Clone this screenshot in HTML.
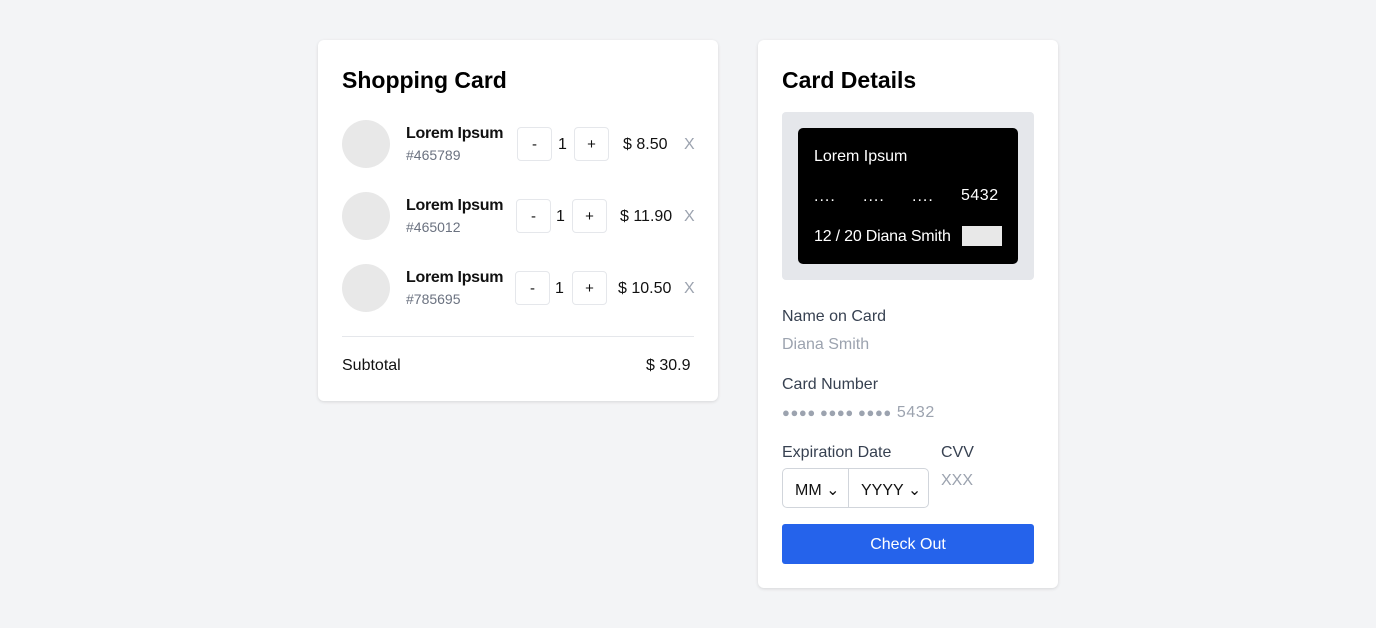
<!DOCTYPE html>
<html><head><style>
*{margin:0;padding:0;box-sizing:border-box}
body{width:1376px;height:628px;background:#f3f4f6;font-family:"Liberation Sans",sans-serif;position:relative;overflow:hidden;color:#111}
.a{position:absolute;white-space:nowrap}
.card{position:absolute;background:#fff;border-radius:6px;box-shadow:0 1px 3px rgba(0,0,0,.12)}
h1{font-size:23px;font-weight:bold;color:#000}
.circ{position:absolute;width:48px;height:48px;border-radius:50%;background:#e8e8e8}
.btn{position:absolute;width:35px;height:34px;border:1px solid #e5e7eb;border-radius:4px;text-align:center;line-height:34px;font-size:15px;background:#fff}
.nm{font-size:16px;font-weight:bold;color:#111;letter-spacing:-0.3px}
.id{font-size:14px;color:#6b7280}
.lab{font-size:16px;color:#374151}
.ph{font-size:16px;color:#9ca3af}
</style></head><body>
<div class="card" style="left:318px;top:40px;width:400px;height:361px"></div>
<div class="a" style="left:342px;top:67px"><h1>Shopping Card</h1></div>

<div class="circ" style="left:342px;top:120px"></div>
<div class="a nm" style="left:406px;top:125px">Lorem Ipsum</div>
<div class="a id" style="left:406px;top:147px">#465789</div>
<div class="btn" style="left:517px;top:127px">-</div>
<div class="a" style="left:558px;top:136px;font-size:16px">1</div>
<div class="btn" style="left:574px;top:127px">+</div>
<div class="a" style="left:623px;top:136px;font-size:16px">$ 8.50</div>
<div class="a" style="left:684px;top:136px;font-size:16px;color:#9ca3af">X</div>

<div class="circ" style="left:342px;top:192px"></div>
<div class="a nm" style="left:406px;top:197px">Lorem Ipsum</div>
<div class="a id" style="left:406px;top:219px">#465012</div>
<div class="btn" style="left:516px;top:199px">-</div>
<div class="a" style="left:556px;top:208px;font-size:16px">1</div>
<div class="btn" style="left:572px;top:199px">+</div>
<div class="a" style="left:620px;top:208px;font-size:16px">$ 11.90</div>
<div class="a" style="left:684px;top:208px;font-size:16px;color:#9ca3af">X</div>

<div class="circ" style="left:342px;top:264px"></div>
<div class="a nm" style="left:406px;top:269px">Lorem Ipsum</div>
<div class="a id" style="left:406px;top:291px">#785695</div>
<div class="btn" style="left:515px;top:271px">-</div>
<div class="a" style="left:555px;top:280px;font-size:16px">1</div>
<div class="btn" style="left:572px;top:271px">+</div>
<div class="a" style="left:618px;top:280px;font-size:16px">$ 10.50</div>
<div class="a" style="left:684px;top:280px;font-size:16px;color:#9ca3af">X</div>

<div class="a" style="left:342px;top:336px;width:352px;height:1px;background:#e5e7eb"></div>
<div class="a" style="left:342px;top:357px;font-size:16px">Subtotal</div>
<div class="a" style="left:646px;top:357px;font-size:16px">$ 30.9</div>

<div class="card" style="left:758px;top:40px;width:300px;height:548px"></div>
<div class="a" style="left:782px;top:67px"><h1>Card Details</h1></div>
<div class="a" style="left:782px;top:112px;width:252px;height:168px;background:#e5e7eb;border-radius:4px"></div>
<div class="a" style="left:798px;top:128px;width:220px;height:136px;background:#000;border-radius:5px"></div>
<div class="a" style="left:814px;top:148px;color:#fff;font-size:16px">Lorem Ipsum</div>
<div class="a" style="left:814px;top:188px;color:#fff;font-size:16px;letter-spacing:1px">....</div>
<div class="a" style="left:863px;top:188px;color:#fff;font-size:16px;letter-spacing:1px">....</div>
<div class="a" style="left:912px;top:188px;color:#fff;font-size:16px;letter-spacing:1px">....</div>
<div class="a" style="left:961px;top:187px;color:#fff;font-size:16px;letter-spacing:0.5px">5432</div>
<div class="a" style="left:814px;top:228px;color:#fff;font-size:16px;letter-spacing:-0.2px">12 / 20 Diana Smith</div>
<div class="a" style="left:962px;top:226px;width:40px;height:20px;background:#e8e8e8"></div>

<div class="a lab" style="left:782px;top:308px">Name on Card</div>
<div class="a ph" style="left:782px;top:336px">Diana Smith</div>
<div class="a lab" style="left:782px;top:376px">Card Number</div>
<div class="a ph" style="left:782px;top:404px;letter-spacing:0.6px"><span style="font-size:13px">●●●● ●●●● ●●●●</span> 5432</div>
<div class="a lab" style="left:782px;top:444px">Expiration Date</div>
<div class="a lab" style="left:941px;top:444px">CVV</div>
<div class="a ph" style="left:941px;top:472px">XXX</div>
<div class="a" style="left:782px;top:468px;width:147px;height:40px;border:1px solid #d1d5db;border-radius:5px"></div>
<div class="a" style="left:848px;top:469px;width:1px;height:38px;background:#d1d5db"></div>
<div class="a" style="left:795px;top:480px;font-size:16px">MM ⌄</div>
<div class="a" style="left:861px;top:480px;font-size:16px">YYYY ⌄</div>
<div class="a" style="left:782px;top:524px;width:252px;height:40px;background:#2563eb;border-radius:3px;color:#fff;font-size:16px;text-align:center;line-height:41px">Check Out</div>
</body></html>
